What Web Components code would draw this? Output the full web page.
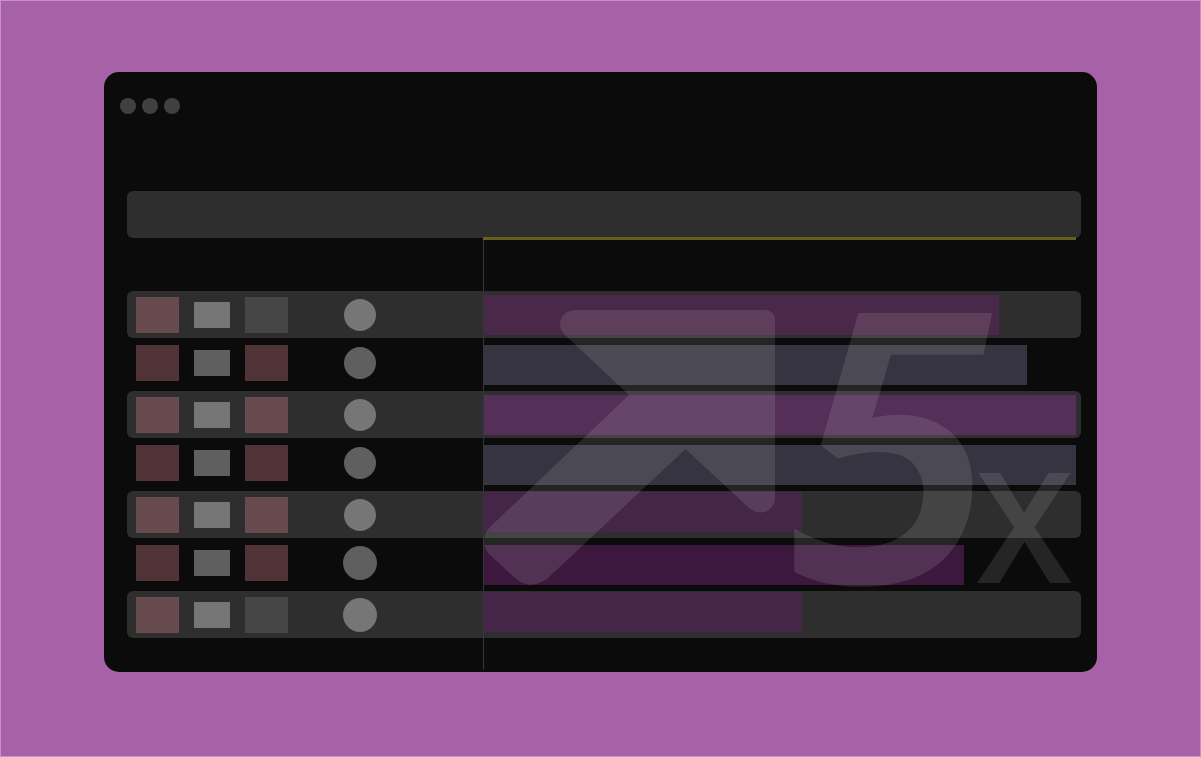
<!DOCTYPE html>
<html lang="en">
<head>
<meta charset="utf-8">
<title>Growth chart</title>
<style>
  * { box-sizing: border-box; }
  body { margin: 0; font-family: "Noto Sans", "Liberation Sans", sans-serif; }
</style>
</head>
<body>
<growth-stage>
  <app-window>
    <growth-chart>
      <chart-row band value="87" color="#4a2849" third="muted"></chart-row>
      <chart-row value="91.8" color="#363440"></chart-row>
      <chart-row band value="100" color="#542f58"></chart-row>
      <chart-row value="100" color="#363440"></chart-row>
      <chart-row band raised value="53.8" color="#452648"></chart-row>
      <chart-row large value="81" color="#3c183f"></chart-row>
      <chart-row band raised large value="53.8" color="#452648" third="muted"></chart-row>
    </growth-chart>
  </app-window>
</growth-stage>

<script>
class Base extends HTMLElement {
  render(html) {
    this.attachShadow({ mode: "open" }).innerHTML =
      "<style>*{box-sizing:border-box}</style>" + html;
  }
}

customElements.define("growth-stage", class extends Base {
  connectedCallback() {
    this.render(`
      <style>
        :host {
          display: block; box-sizing: border-box; min-height: 100vh;
          padding: 71px 103px 84px; background: #a761a6;
          border: 1px solid #c791c6;
        }
      </style>
      <slot></slot>`);
  }
});

customElements.define("app-window", class extends Base {
  connectedCallback() {
    this.render(`
      <style>
        :host {
          display: block; box-sizing: border-box;
          padding: 26px 16px 0; border-radius: 15px; background: #0b0b0b;
        }
        header { display: flex; gap: 6px; height: 93px; }
        i { width: 16px; height: 16px; border-radius: 50%; background: #404040; }
      </style>
      <header><i></i><i></i><i></i></header>
      <slot></slot>`);
  }
});

customElements.define("growth-chart", class extends Base {
  connectedCallback() {
    this.render(`
      <style>
        :host { display: block; padding-left: 7px; }
        .head {
          display: grid; grid-template-columns: 356px 1fr; align-items: end;
          height: 47px; padding-right: 5px; border-radius: 6px; background: #2e2e2e;
        }
        .head i { grid-column: 2; height: 3px; margin-bottom: -2px; background: #65601d; }
        .body { position: relative; padding: 53px 0 34px; }
        .axis {
          position: absolute; left: 356px; top: 2px; bottom: 2px; width: 1px;
          background: #343637;
        }
        svg {
          position: absolute; left: 357px; top: 53px;
          width: calc(100% - 362px); overflow: visible; fill: #fff; opacity: .105;
        }
        .digit { font: italic 600 378px "Noto Sans", sans-serif; }
        .times { font: 400 208px Roboto, sans-serif; }
      </style>
      <div class="head"><i></i></div>
      <div class="body">
        <slot></slot>
        <div class="axis"></div>
        <svg viewBox="484 291 592 300">
          <path d="M576 310H766Q775 311 775 321V497C775 511 760 518 748 507L685.500 449L548 578Q531 591 516 579L489 554Q478 541 490 527L629 395L565 335C555 325 561 310 576 310Z"/>
          <text y="583"><tspan class="digit" x="786">5</tspan><tspan class="times" x="973">x</tspan></text>
        </svg>
      </div>`);
  }
});

customElements.define("chart-row", class extends Base {
  connectedCallback() {
    const third = this.getAttribute("third") || "rose";
    this.render(`
      <style>
        :host {
          --rose: #4f3337; --grey: #5f5f5f; --muted: #464646;
          display: grid; box-sizing: border-box; grid-template-columns: 357px 1fr;
          align-items: center; height: 53px; padding-right: 5px;
        }
        :host([band]) {
          --rose: #664a4e; --grey: #767676;
          height: 47px; border-radius: 6px; background: #2e2e2e;
        }
        .cells { display: flex; align-items: center; padding: 0 0 4px 9px; }
        :host([band]) .cells { padding-bottom: 0; }
        .tile { width: 43px; height: 36px; background: var(--rose); }
        .tile.muted { background: var(--muted); }
        .chip { width: 36px; height: 26px; margin: 0 15px; background: var(--grey); }
        .slot { display: flex; justify-content: center; width: 34px; margin-left: 55px; }
        .dot { width: 32px; height: 32px; border-radius: 50%; background: var(--grey); }
        :host([large]) .dot { width: 34px; height: 34px; }
        .bar { height: 40px; width: ${this.getAttribute("value")}%;
               background: ${this.getAttribute("color")}; }
        :host([raised]) .bar { align-self: start; margin-top: 1px; }
      </style>
      <div class="cells">
        <div class="tile"></div><div class="chip"></div><div class="tile ${third}"></div>
        <div class="slot"><div class="dot"></div></div>
      </div>
      <div class="bar"></div>`);
  }
});
</script>
</body>
</html>
